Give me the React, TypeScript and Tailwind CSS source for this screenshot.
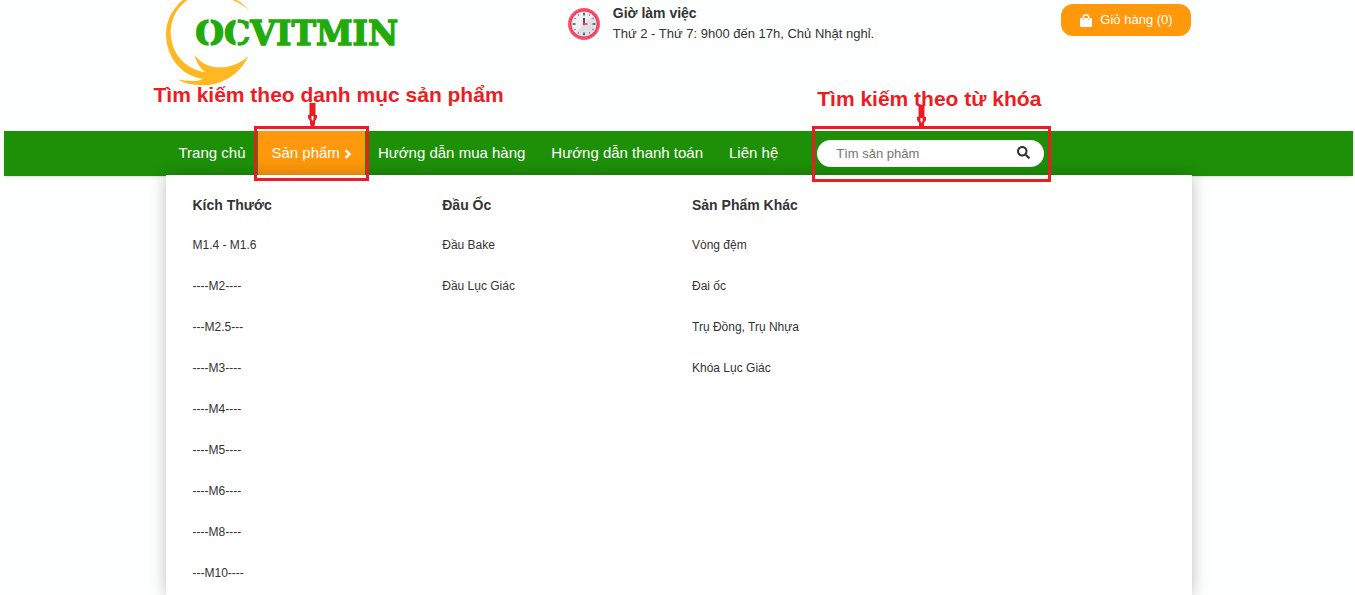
import { FaSearch } from 'react-icons/fa';

const categories = [
  {
    title: 'Kích Thước',
    items: [
      'M1.4 - M1.6',
      '----M2----',
      '---M2.5---',
      '----M3----',
      '----M4----',
      '----M5----',
      '----M6----',
      '----M8----',
      '---M10----',
    ],
  },
  { title: 'Đầu Ốc', items: ['Đầu Bake', 'Đầu Lục Giác'] },
  {
    title: 'Sản Phẩm Khác',
    items: ['Vòng đệm', 'Đai ốc', 'Trụ Đồng, Trụ Nhựa', 'Khóa Lục Giác'],
  },
];

function Logo() {
  return (
    <svg viewBox="48 0 765 264" className="w-[255px] h-[88px]" role="img" aria-label="Ocvitmin">
      <g fill="#ffb822">
        <path d="M98 0C62 32 48 66 48 104C50 172 92 226 158 236C148 246 112 244 82 238C104 252 140 258 176 255C232 248 274 214 295 168C266 196 224 207 188 200C164 195 148 183 134 165C138 186 150 205 166 217C104 206 64 160 62 98C62 58 80 24 112 0Z" />
        <path d="M244 -6C266 0 284 14 298 34C282 16 262 4 240 -2Z" />
      </g>
      <text
        x="136"
        y="136"
        fontSize="99"
        fontWeight="700"
        fill="#22ab0b"
        stroke="#22ab0b"
        strokeWidth="4"
        className="font-['DejaVu_Serif',serif]"
      >
        OCVITMIN
      </text>
      {/* stencil cuts */}
      <path d="M179 56V144M260 56V144" stroke="#fdfffe" strokeWidth="6" />
    </svg>
  );
}

function Clock() {
  return (
    <svg viewBox="0 0 32 32" className="size-8" aria-hidden="true">
      <circle cx="16" cy="16" r="16" fill="#f8546c" />
      <circle cx="16" cy="16" r="14" fill="#e9405c" />
      <circle cx="16" cy="16" r="12.5" fill="#f1f1f3" />
      <path d="M25 7.4A12.5 12.5 0 0 1 7.4 25Z" fill="#dfe0e4" />
      <path d="M16 4.5v3M16 24.5v3M4.5 16h3M24.5 16h3" stroke="#46506a" strokeWidth="1.6" />
      <g fill="#59627a">
        <circle cx="10.5" cy="7" r=".7" />
        <circle cx="21.5" cy="7" r=".7" />
        <circle cx="7" cy="10.5" r=".7" />
        <circle cx="25" cy="10.5" r=".7" />
        <circle cx="7" cy="21.5" r=".7" />
        <circle cx="25" cy="21.5" r=".7" />
        <circle cx="10.5" cy="25" r=".7" />
        <circle cx="21.5" cy="25" r=".7" />
      </g>
      <path d="M16 10v6" stroke="#46506a" strokeWidth="2" />
      <path d="M16 16h3.5" stroke="#e9405c" strokeWidth="1.6" />
      <circle cx="16" cy="16" r="1.4" fill="#e9405c" />
    </svg>
  );
}

function Bag() {
  return (
    <svg viewBox="0 0 12 13" className="w-3 h-[13px]" aria-hidden="true">
      <path d="M0 4h12v7.5a1.5 1.5 0 0 1-1.5 1.5h-9A1.5 1.5 0 0 1 0 11.5Z" fill="#fff" />
      <path d="M3.3 6V3.5a2.7 2.7 0 0 1 5.4 0V6" fill="none" stroke="#fff" strokeWidth="1.4" />
      <path d="M3.3 4.5v1.5M8.7 4.5v1.5" stroke="#ff980a" strokeWidth=".8" />
    </svg>
  );
}

function Chevron() {
  return (
    <svg viewBox="0 0 8 10" className="w-2 h-2.5" aria-hidden="true">
      <path d="M1.5 1.2 5.5 5 1.5 8.8" fill="none" stroke="#fff" strokeWidth="2.4" />
    </svg>
  );
}

function Arrow({ className }: { className: string }) {
  return (
    <svg viewBox="0 0 9 24" className={`absolute w-[9px] h-6 ${className}`} aria-hidden="true">
      <path d="M1.5 0h6v12H9v3L7 18v3L6 24H3L2 21v-3L0 15v-3h1.5Z" fill="#ed1c24" />
      <path d="M3.5 13h2v3l-1 2-1-2Z" fill="#fff" />
    </svg>
  );
}

export default function App() {
  return (
    <div className="min-h-screen flex flex-col bg-[#fdfffe] pl-1 pr-0.5 text-[#333] font-['Liberation_Sans',Arial,sans-serif]">
      <header className="h-[131px] w-full max-w-[1026px] mx-auto flex items-start justify-between">
        <Logo />
        <div className="flex items-start gap-[13px] pt-0.5 pr-10">
          <div className="pt-1.5">
            <Clock />
          </div>
          <div>
            <h2 className="text-[14px] leading-[22px] font-bold">Giờ làm việc</h2>
            <p className="text-[13px] leading-5">Thứ 2 - Thứ 7: 9h00 đến 17h, Chủ Nhật nghỉ.</p>
          </div>
        </div>
        <button className="mt-1 h-8 w-[130px] rounded-xl bg-[#ff980a] text-white text-[13px] flex items-center justify-center gap-2">
          <Bag />
          Giỏ hàng (0)
        </button>
      </header>

      <nav className="relative h-[45px] bg-[#1d9008] shadow-sm text-white text-[15px]">
        <div className="h-full w-full max-w-[1026px] mx-auto flex items-center">
          <ul className="h-full flex whitespace-nowrap">
            <li className="flex">
              <a href="#" className="flex items-center px-[13px]">Trang chủ</a>
            </li>
            <li className="relative flex">
              <a href="#" className="flex items-center gap-1 px-[13px] bg-[#ff980a]">
                Sản phẩm
                <Chevron />
              </a>
              <div className="absolute z-20 -top-[5px] -bottom-[5px] -left-1 -right-1 border-[3px] border-[#ed1c24]">
                <p className="absolute -top-[48px] -left-[104px] text-[21px] leading-7 font-bold text-[#ed1c24]">
                  Tìm kiếm theo danh mục sản phẩm
                </p>
                <Arrow className="-top-[26px] left-[51px]" />
              </div>
            </li>
            <li className="flex">
              <a href="#" className="flex items-center px-[13px]">Hướng dẫn mua hàng</a>
            </li>
            <li className="flex">
              <a href="#" className="flex items-center px-[13px]">Hướng dẫn thanh toán</a>
            </li>
            <li className="flex">
              <a href="#" className="flex items-center px-[13px]">Liên hệ</a>
            </li>
          </ul>
          <form className="relative ml-[26px] w-[227px]">
            <input
              type="text"
              aria-label="Tìm sản phẩm"
              placeholder="Tìm sản phâm"
              className="block w-full h-[27px] rounded-full bg-white pl-[19px] pr-10 text-[13px] text-[#333] placeholder:text-[#757575] outline-none"
            />
            <button type="button" aria-label="Tìm kiếm" className="absolute right-[14px] top-1.5 text-[#333]">
              <FaSearch className="size-[13px]" />
            </button>
            <div className="pointer-events-none absolute z-20 -top-[14px] -bottom-[15px] -left-[5px] -right-[7px] border-[3px] border-[#ed1c24]">
              <p className="absolute -top-[44px] left-0.5 text-[21px] leading-7 font-bold text-[#ed1c24] whitespace-nowrap">
                Tìm kiếm theo từ khóa
              </p>
              <Arrow className="-top-[24px] left-[102px]" />
            </div>
          </form>
        </div>
      </nav>

      <section className="relative z-10 -mt-px flex-1 w-full max-w-[1026px] mx-auto bg-white pl-[27px] pt-5 grid grid-cols-4 shadow-[0_0_15px_rgba(0,0,0,0.25)]">
        {categories.map((category) => (
          <div key={category.title}>
            <h3 className="text-[14px] leading-5 font-bold mb-2.5">{category.title}</h3>
            <ul>
              {category.items.map((item) => (
                <li key={item}>
                  <a href="#" className="block text-[12px] leading-[41px]">{item}</a>
                </li>
              ))}
            </ul>
          </div>
        ))}
      </section>
    </div>
  );
}
